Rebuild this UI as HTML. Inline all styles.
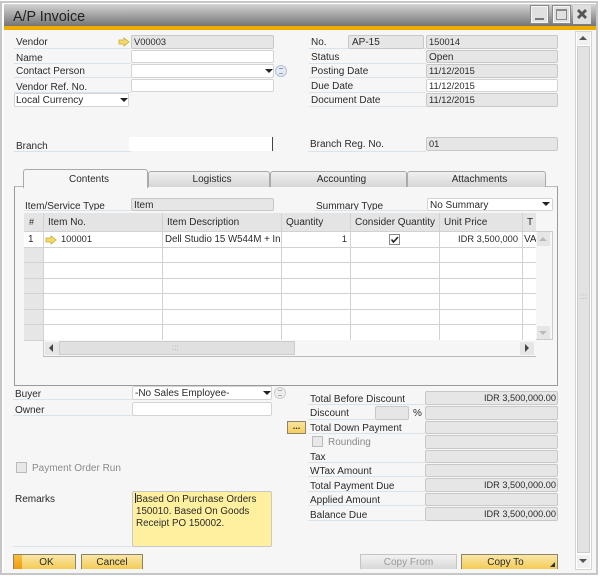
<!DOCTYPE html>
<html><head><meta charset="utf-8"><style>
html,body{margin:0;padding:0}
body{width:600px;height:577px;position:relative;overflow:hidden;background:#fff;font:10px/15px "Liberation Sans",sans-serif;color:#2a2a2a;filter:blur(.35px)}
div,span,svg{position:absolute;box-sizing:border-box}
.l{white-space:nowrap;height:15px}
.u{height:1px;background:#dbe3ea}
.f{border:1px solid #c8c8c8;border-radius:2px;background:#e6e6e6;padding-left:2px;white-space:nowrap;line-height:14px;overflow:hidden}
.w{background:#fff;border-color:#d4d4d4}
.r{text-align:right;padding:0 1px 0 0;font-size:9.2px;line-height:12px}
.n{font-size:9.3px}
.f.n{line-height:12px}
.t{background:linear-gradient(#f0f0f0,#d6d6d6);border:1px solid #aaa;border-bottom:0;border-radius:3px 3px 0 0;text-align:center;line-height:16px;padding-left:6px}
.g{background:#d2d2d2}
.b{background:linear-gradient(#f8e6a8,#f5cb55);border:1px solid #8d8468;border-bottom:0;text-align:center;line-height:15px}
.ar{width:0;height:0;border-left:4px solid transparent;border-right:4px solid transparent;border-top:4px solid #222}
</style></head><body>
<div style="left:0;top:1px;width:598px;height:574px;border:2px solid #c6c6c6;background:#fff"></div>
<div style="left:4px;top:4px;width:592px;height:569px;background:#f6f6f6"></div>
<div style="left:4px;top:4px;width:592px;height:22px;background:linear-gradient(#d4d4d4,#757575)"></div>
<div style="left:4px;top:26px;width:592px;height:4px;background:#f0ab00"></div>
<div class="l" style="left:13px;top:8px;font-size:14.3px;line-height:18px;height:18px;color:#222">A/P Invoice</div>
<div style="left:530px;top:5px;width:19px;height:19px;background:#e0e0e0;border:2px solid #f6f6f6;outline:1px solid #8a8a8a;outline-offset:-1px"><div style="left:3px;top:11px;width:9px;height:2px;background:#777"></div></div>
<div style="left:552px;top:5px;width:19px;height:19px;background:#e0e0e0;border:2px solid #f6f6f6;outline:1px solid #8a8a8a;outline-offset:-1px"><div style="left:2px;top:2px;width:11px;height:11px;border:1px solid #888;border-top-width:2px"></div></div>
<div style="left:573px;top:5px;width:18px;height:19px;background:#dedede"><svg style="left:3px;top:3px" width="12" height="12"><path d="M2 2L10 10M10 2L2 10" stroke="#555" stroke-width="2.8"/></svg></div>

<!-- window scrollbar -->
<div style="left:575px;top:31px;width:17px;height:539px;background:#fff;border:1px solid #d4d4cc"></div>
<div style="left:577px;top:46px;width:13px;height:507px;background:#e2e2e2;border:1px solid #ccc"></div>
<div style="left:577px;top:32px;width:13px;height:13px;background:#f0f0f0"><div class="ar" style="left:2px;top:4px;border-top:0;border-bottom:4px solid #555"></div></div>
<div style="left:577px;top:555px;width:13px;height:13px;background:#f0f0f0"><div class="ar" style="left:2px;top:4px;border-top-color:#555"></div></div>
<div class="l" style="left:580px;top:292px;font-size:8px;line-height:10px;height:10px;width:8px;color:#aaa">:::</div>

<!-- top left -->
<div class="l" style="left:16px;top:35px">Vendor</div><div class="u" style="left:14px;top:48px;width:117px"></div>
<div class="l" style="left:16px;top:51px">Name</div><div class="u" style="left:14px;top:63px;width:117px"></div>
<div class="l" style="left:16px;top:64px">Contact Person</div><div class="u" style="left:14px;top:77px;width:117px"></div>
<div class="l" style="left:16px;top:80px">Vendor Ref. No.</div><div class="u" style="left:14px;top:92px;width:117px"></div>
<svg style="left:118px;top:37px" width="12" height="10"><path d="M1 3H6V1L11 5L6 9V7H1Z" fill="#f5dc6a" stroke="#c9a93a" stroke-width=".8"/></svg>
<div class="f n" style="left:131px;top:35px;width:143px;height:14px">V00003</div>
<div class="f w" style="left:131px;top:50px;width:143px;height:13px"></div>
<div class="f w" style="left:131px;top:64px;width:143px;height:14px"><div class="ar" style="left:133px;top:4px"></div></div>
<div class="f w" style="left:131px;top:79px;width:143px;height:13px"></div>
<div style="left:275px;top:65px;width:12px;height:12px;border:1px solid #b4bfd6;border-radius:50%;background:#e6eaf2"><div style="left:3px;top:2px;width:4px;height:6px;border-top:1px solid #8d99b5;border-bottom:1px solid #8d99b5"></div></div>
<div class="f w" style="left:14px;top:93px;width:115px;height:14px;padding-left:1px">Local Currency<div class="ar" style="left:105px;top:4px"></div></div>
<div class="l" style="left:16px;top:139px">Branch</div><div class="u" style="left:14px;top:151px;width:117px"></div>
<div style="left:129px;top:137px;width:144px;height:14px;background:#fff;border-right:1px solid #444"></div>

<!-- top right -->
<div class="l" style="left:311px;top:35px">No.</div><div class="u" style="left:309px;top:48px;width:117px"></div>
<div class="l" style="left:311px;top:50px">Status</div><div class="u" style="left:309px;top:63px;width:117px"></div>
<div class="l" style="left:311px;top:64px">Posting Date</div><div class="u" style="left:309px;top:77px;width:117px"></div>
<div class="l" style="left:311px;top:79px">Due Date</div><div class="u" style="left:309px;top:92px;width:117px"></div>
<div class="l" style="left:311px;top:93px">Document Date</div><div class="u" style="left:309px;top:106px;width:117px"></div>
<div class="f" style="left:348px;top:35px;width:76px;height:14px;padding-left:3px">AP-15</div>
<div class="f n" style="left:426px;top:35px;width:132px;height:14px">150014</div>
<div class="f" style="left:426px;top:50px;width:132px;height:13px">Open</div>
<div class="f n" style="left:426px;top:64px;width:132px;height:14px">11/12/2015</div>
<div class="f w n" style="left:426px;top:79px;width:132px;height:13px">11/12/2015</div>
<div class="f n" style="left:426px;top:93px;width:132px;height:14px">11/12/2015</div>
<div class="l" style="left:310px;top:137px">Branch Reg. No.</div><div class="u" style="left:308px;top:151px;width:118px"></div>
<div class="f n" style="left:426px;top:137px;width:132px;height:14px">01</div>

<!-- tabs -->
<div style="left:14px;top:186px;width:544px;height:200px;border:1px solid #9a9a9a;border-top-color:#bbb;background:#f6f6f6"></div>
<div class="t" style="left:148px;top:171px;width:122px;height:16px">Logistics</div>
<div class="t" style="left:270px;top:171px;width:137px;height:16px">Accounting</div>
<div class="t" style="left:407px;top:171px;width:139px;height:16px">Attachments</div>
<div style="left:23px;top:169px;width:125px;height:19px;background:#f6f6f6;border:1px solid #aaa;border-bottom:0;border-radius:3px 3px 0 0;text-align:center;line-height:19px;padding-left:7px">Contents</div>

<div class="l" style="left:25px;top:199px">Item/Service Type</div><div class="u" style="left:24px;top:210px;width:107px"></div>
<div class="f" style="left:131px;top:198px;width:143px;height:13px;line-height:13px">Item</div>
<div class="l" style="left:316px;top:199px">Summary Type</div><div class="u" style="left:314px;top:210px;width:113px"></div>
<div class="f w" style="left:427px;top:198px;width:126px;height:13px;line-height:13px">No Summary<div class="ar" style="left:114px;top:3px"></div></div>

<!-- grid -->
<div style="left:24px;top:213px;width:512px;height:127px;background:#fff"></div>
<div style="left:24px;top:213px;width:512px;height:19px;background:#e4e4e4"></div>
<div style="left:24px;top:248px;width:19px;height:92px;background:#e6e6e6"></div>
<div class="g" style="left:24px;top:231px;width:512px;height:1px"></div>
<div class="g" style="left:24px;top:247px;width:512px;height:1px"></div>
<div class="g" style="left:24px;top:262px;width:512px;height:1px"></div>
<div class="g" style="left:24px;top:278px;width:512px;height:1px"></div>
<div class="g" style="left:24px;top:293px;width:512px;height:1px"></div>
<div class="g" style="left:24px;top:309px;width:512px;height:1px"></div>
<div class="g" style="left:24px;top:324px;width:512px;height:1px"></div>
<div class="g" style="left:24px;top:340px;width:512px;height:1px"></div>
<div class="g" style="left:43px;top:213px;width:1px;height:127px"></div>
<div class="g" style="left:162px;top:213px;width:1px;height:127px"></div>
<div class="g" style="left:281px;top:213px;width:1px;height:127px"></div>
<div class="g" style="left:350px;top:213px;width:1px;height:127px"></div>
<div class="g" style="left:439px;top:213px;width:1px;height:127px"></div>
<div class="g" style="left:522px;top:213px;width:1px;height:127px"></div>
<div class="l" style="left:29px;top:215px;font-size:9px">#</div>
<div class="l" style="left:48px;top:215px">Item No.</div>
<div class="l" style="left:167px;top:215px">Item Description</div>
<div class="l" style="left:286px;top:215px">Quantity</div>
<div class="l" style="left:355px;top:215px">Consider Quantity</div>
<div class="l" style="left:444px;top:215px">Unit Price</div>
<div class="l" style="left:527px;top:215px">T</div>
<div class="l" style="left:28px;top:232px">1</div>
<svg style="left:45px;top:235px" width="12" height="10"><path d="M1 3H6V1L11 5L6 9V7H1Z" fill="#f5dc6a" stroke="#c9a93a" stroke-width=".8"/></svg>
<div class="l n" style="left:61px;top:232px">100001</div>
<div class="l" style="left:165px;top:232px;width:116px;overflow:hidden;font-size:9.7px">Dell Studio 15 W544M + In</div>
<div class="l n" style="left:282px;top:232px;width:65px;text-align:right">1</div>
<div style="left:389px;top:234px;width:11px;height:11px;border:1px solid #888;background:#fff"><svg style="left:0;top:0" width="9" height="9"><path d="M1.5 4.5L3.5 7L8 2" fill="none" stroke="#222" stroke-width="1.6"/></svg></div>
<div class="l n" style="left:440px;top:232px;width:78px;text-align:right">IDR 3,500,000</div>
<div class="l" style="left:524px;top:232px;width:12px;overflow:hidden">VA</div>

<!-- grid scrollbars -->
<div style="left:536px;top:231px;width:17px;height:109px;background:#f6f6f6;border-right:1px solid #ccc;border-top:1px solid #ccc;border-bottom:1px solid #ccc"></div>
<div style="left:537px;top:232px;width:13px;height:14px;background:#e6e6e6"><div class="ar" style="left:2px;top:5px;border-top:0;border-bottom:4px solid #bbb"></div></div>
<div style="left:537px;top:326px;width:13px;height:13px;background:#e6e6e6"><div class="ar" style="left:2px;top:5px;border-top-color:#bbb"></div></div>
<div style="left:43px;top:340px;width:493px;height:17px;background:#f6f6f6;border-left:1px solid #ccc;border-bottom:1px solid #bbb"></div>
<div style="left:45px;top:342px;width:14px;height:13px;background:#e6e6e6"><div style="left:4px;top:2px;width:0;height:0;border-top:4px solid transparent;border-bottom:4px solid transparent;border-right:4px solid #444"></div></div>
<div style="left:59px;top:341px;width:236px;height:14px;background:#e0e0e0;border:1px solid #ccc"></div>
<div class="l" style="left:172px;top:343px;font-size:8px;line-height:10px;height:10px;color:#aaa">:::</div>
<div style="left:520px;top:342px;width:14px;height:13px;background:#e6e6e6"><div style="left:5px;top:2px;width:0;height:0;border-top:4px solid transparent;border-bottom:4px solid transparent;border-left:4px solid #444"></div></div>

<!-- bottom left -->
<div class="l" style="left:15px;top:387px">Buyer</div><div class="u" style="left:13px;top:399px;width:119px"></div>
<div class="l" style="left:15px;top:403px">Owner</div><div class="u" style="left:13px;top:415px;width:119px"></div>
<div class="f w" style="left:132px;top:386px;width:140px;height:14px">-No Sales Employee-<div class="ar" style="left:130px;top:4px"></div></div>
<div class="f w" style="left:132px;top:402px;width:140px;height:14px"></div>
<div style="left:274px;top:387px;width:12px;height:12px;border:1px solid #ccc;border-radius:50%;background:#eee"><div style="left:3px;top:2px;width:4px;height:6px;border-top:1px solid #aaa;border-bottom:1px solid #aaa"></div></div>
<div style="left:16px;top:462px;width:11px;height:11px;border:1px solid #bbb;background:#e8e8e8"></div>
<div class="l" style="left:32px;top:461px;color:#8a8a8a">Payment Order Run</div>
<div class="l" style="left:15px;top:492px">Remarks</div><div class="u" style="left:13px;top:546px;width:119px"></div>
<div class="f" style="left:132px;top:491px;width:140px;height:56px;background:#fff0a0;padding:2px 3px;line-height:12px;white-space:normal;font-size:9.8px">Based On Purchase Orders 150010. Based On Goods Receipt PO 150002.</div>
<div style="left:135px;top:493px;width:1px;height:10px;background:#225"></div>
<div class="b" style="left:13px;top:554px;width:63px;height:15px;padding-left:4px">OK<div style="left:0;top:0;width:8px;height:14px;background:linear-gradient(#f8c040,#ef9a10)"></div></div>
<div class="b" style="left:81px;top:554px;width:62px;height:15px">Cancel</div>

<!-- totals -->
<div class="l" style="left:310px;top:392px">Total Before Discount</div><div class="u" style="left:308px;top:404px;width:117px"></div>
<div class="f r" style="left:425px;top:391px;width:133px;height:14px">IDR 3,500,000.00</div>
<div class="l" style="left:310px;top:406px">Discount</div><div class="u" style="left:308px;top:419px;width:67px"></div>
<div class="f" style="left:375px;top:406px;width:34px;height:14px"></div>
<div class="l" style="left:413px;top:406px">%</div>
<div class="f" style="left:425px;top:406px;width:133px;height:14px"></div>
<div style="left:287px;top:421px;width:19px;height:13px;background:linear-gradient(#f8e4a0,#f6ce5c);border:1px solid #8d8468;text-align:center;line-height:8px;font-weight:bold;font-size:9px">...</div>
<div class="l" style="left:310px;top:421px">Total Down Payment</div><div class="u" style="left:308px;top:433px;width:117px"></div>
<div class="f" style="left:425px;top:421px;width:133px;height:13px"></div>
<div style="left:312px;top:436px;width:11px;height:11px;border:1px solid #bbb;background:#e8e8e8"></div>
<div class="l" style="left:328px;top:435px;color:#8a8a8a">Rounding</div>
<div class="f" style="left:425px;top:435px;width:133px;height:14px"></div>
<div class="l" style="left:310px;top:450px">Tax</div><div class="u" style="left:308px;top:462px;width:117px"></div>
<div class="f" style="left:425px;top:450px;width:133px;height:13px"></div>
<div class="l" style="left:310px;top:464px">WTax Amount</div><div class="u" style="left:308px;top:476px;width:117px"></div>
<div class="f" style="left:425px;top:464px;width:133px;height:13px"></div>
<div class="l" style="left:310px;top:479px">Total Payment Due</div><div class="u" style="left:308px;top:491px;width:117px"></div>
<div class="f r" style="left:425px;top:478px;width:133px;height:14px">IDR 3,500,000.00</div>
<div class="l" style="left:310px;top:493px">Applied Amount</div><div class="u" style="left:308px;top:505px;width:117px"></div>
<div class="f" style="left:425px;top:493px;width:133px;height:13px"></div>
<div class="l" style="left:310px;top:508px">Balance Due</div><div class="u" style="left:308px;top:520px;width:117px"></div>
<div class="f r" style="left:425px;top:507px;width:133px;height:14px">IDR 3,500,000.00</div>

<div style="left:360px;top:554px;width:97px;height:15px;background:linear-gradient(#f2f2f2,#d8d8d8);border:1px solid #c4c4c4;border-bottom:0;text-align:center;line-height:15px;color:#999">Copy From</div>
<div class="b" style="left:461px;top:554px;width:97px;height:15px;padding-right:8px">Copy To<svg style="left:88px;top:7px" width="6" height="6"><path d="M5 0V5H0Z" fill="#333"/></svg></div>
</body></html>
